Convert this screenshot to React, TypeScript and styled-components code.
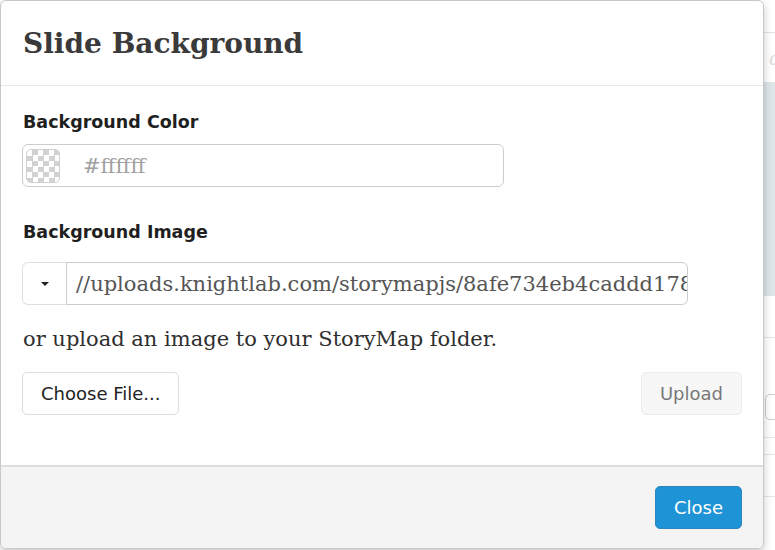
import styled, { createGlobalStyle } from "styled-components";

const GlobalStyle = createGlobalStyle`
  html, body {
    margin: 0;
    padding: 0;
    background: #ffffff;
  }
  * { box-sizing: border-box; }
`;

const SERIF = `"DejaVu Serif", "Liberation Serif", serif`;
const SANS = `"DejaVu Sans", "Open Sans", sans-serif`;

const Page = styled.div`
  position: relative;
  width: 775px;
  height: 550px;
  overflow: hidden;
  background: #ffffff;
`;

/* the editor page showing behind the dialog */
const Behind = styled.div`
  display: flex;
  flex-direction: column;
  width: 100%;
  height: 100%;
`;

const TopBar = styled.div`
  height: 33px;
  border-bottom: 1px solid #e2e2e2;
`;

const SubRow = styled.div`
  height: 49px;
  display: flex;
  align-items: center;
  justify-content: flex-end;
  font-family: ${SERIF};
  font-style: italic;
  font-size: 20px;
  color: #dcdcdc;
  span { margin-right: -6px; }
`;

const MapPanel = styled.div`
  height: 214px;
  background: #dde6e8;
`;

const ListRow = styled.div<{ h: number }>`
  height: ${(p) => p.h}px;
  border-bottom: 1px solid #e6e6e6;
  display: flex;
  align-items: flex-start;
  justify-content: flex-end;
`;

const GhostButton = styled.div`
  width: 20px;
  height: 26px;
  margin-top: 56px;
  border: 1px solid #cfcfcf;
  border-radius: 5px;
  margin-right: -10px;
`;

const Modal = styled.div`
  position: absolute;
  top: 0;
  left: 0;
  width: 764px;
  height: 549px;
  display: flex;
  flex-direction: column;
  background: #ffffff;
  border: 1px solid #c8c8c8;
  border-radius: 6px;
  box-shadow: 0 3px 9px rgba(0, 0, 0, 0.22);
  overflow: hidden;
`;

const Header = styled.div`
  height: 85px;
  flex: none;
  display: flex;
  align-items: center;
  padding: 0 22px;
  border-bottom: 1px solid #e8e8e8;
`;

const Title = styled.h4`
  margin: 0;
  font-family: ${SERIF};
  font-weight: 700;
  font-size: 28px;
  color: #3a3a3a;
`;

const Body = styled.div`
  flex: 1;
  display: flex;
  flex-direction: column;
  padding: 24px 21px 0 21px;
`;

const Label = styled.label`
  display: block;
  font-family: ${SANS};
  font-weight: 700;
  font-size: 17.5px;
  line-height: 24px;
  color: #1f1f1f;
  margin: 0 0 0 1px;
`;

const ColorField = styled.div`
  display: flex;
  align-items: center;
  width: 482px;
  height: 43px;
  margin-top: 10px;
  border: 1px solid #cccccc;
  border-radius: 6px;
  padding: 0 3px;
`;

const Swatch = styled.span`
  width: 34px;
  height: 34px;
  border-radius: 5px;
  border: 1px solid #d0d0d0;
  background-color: #ffffff;
  background-image: conic-gradient(
    #d2d2d2 0 25%,
    #ffffff 0 50%,
    #d2d2d2 0 75%,
    #ffffff 0
  );
  background-size: 11px 11px;
`;

const ColorText = styled.span`
  margin-left: 23px;
  font-family: ${SERIF};
  font-size: 21px;
  color: #a0a0a0;
`;

const Section = styled.div`
  margin-top: 33px;
`;

const InputGroup = styled.div`
  display: flex;
  width: 666px;
  height: 43px;
  margin-top: 18px;
`;

const DropButton = styled.div`
  width: 44px;
  flex: none;
  display: flex;
  align-items: center;
  justify-content: center;
  border: 1px solid #e0e0e0;
  border-right: none;
  border-radius: 6px 0 0 6px;
  background: #ffffff;
`;

const Caret = styled.span`
  width: 0;
  height: 0;
  border-left: 4px solid transparent;
  border-right: 4px solid transparent;
  border-top: 4px solid #222;
`;

const UrlInput = styled.div`
  flex: 1;
  min-width: 0;
  display: flex;
  align-items: center;
  padding-left: 9px;
  border: 1px solid #cccccc;
  border-radius: 0 6px 6px 0;
  overflow: hidden;
  white-space: nowrap;
  font-family: ${SERIF};
  font-size: 21px;
  color: #555555;
`;

const Help = styled.p`
  margin: 22px 0 0 1px;
  font-family: ${SERIF};
  font-size: 21px;
  line-height: 24px;
  color: #2f2f2f;
`;

const ButtonRow = styled.div`
  display: flex;
  justify-content: space-between;
  margin-top: 21px;
`;

const Button = styled.button<{ variant?: "default" | "muted" | "primary" }>`
  height: 43px;
  padding: 0 18px;
  border-radius: 5px;
  font-family: ${SANS};
  font-size: 18px;
  cursor: pointer;
  border: 1px solid
    ${(p) =>
      p.variant === "primary"
        ? "#2f86bf"
        : p.variant === "muted"
        ? "#ececec"
        : "#dedede"};
  background: ${(p) =>
    p.variant === "primary"
      ? "#1e93d6"
      : p.variant === "muted"
      ? "#f7f7f7"
      : "#ffffff"};
  color: ${(p) =>
    p.variant === "primary"
      ? "#ffffff"
      : p.variant === "muted"
      ? "#777777"
      : "#222222"};
`;

const Footer = styled.div`
  height: 83px;
  flex: none;
  display: flex;
  align-items: center;
  justify-content: flex-end;
  padding: 0 21px 0 0;
  background: #f4f4f4;
  border-top: 2px solid #dddddd;
`;

const imageUrl =
  "//uploads.knightlab.com/storymapjs/8afe734eb4caddd178c8a0a0e5c4a7b3/slide-background.jpg";

export default function App() {
  return (
    <>
      <GlobalStyle />
      <Page>
        <Behind>
          <TopBar />
          <SubRow>
            <span>a</span>
          </SubRow>
          <MapPanel />
          <ListRow h={42} />
          <ListRow h={100}>
            <GhostButton />
          </ListRow>
          <ListRow h={17} />
          <ListRow h={42} />
        </Behind>
        <Modal>
          <Header>
            <Title>Slide Background</Title>
          </Header>
          <Body>
            <Label>Background Color</Label>
            <ColorField>
              <Swatch />
              <ColorText>#ffffff</ColorText>
            </ColorField>
            <Section>
              <Label>Background Image</Label>
              <InputGroup>
                <DropButton>
                  <Caret />
                </DropButton>
                <UrlInput>{imageUrl}</UrlInput>
              </InputGroup>
            </Section>
            <Help>or upload an image to your StoryMap folder.</Help>
            <ButtonRow>
              <Button>Choose File...</Button>
              <Button variant="muted">Upload</Button>
            </ButtonRow>
          </Body>
          <Footer>
            <Button variant="primary">Close</Button>
          </Footer>
        </Modal>
      </Page>
    </>
  );
}
